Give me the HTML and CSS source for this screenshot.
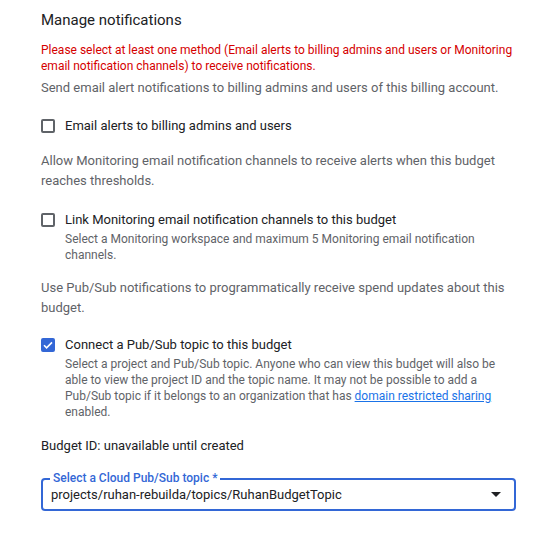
FILE: index.html
```html
<!DOCTYPE html>
<html>
<head>
<meta charset="utf-8">
<link rel="stylesheet" href="styles.css">
</head>
<body>
<div class="page">
  <h2 class="title">Manage notifications</h2>
  <p class="error">Please select at least one method (Email alerts to billing admins and users or Monitoring email notification channels) to receive notifications.</p>
  <p class="desc desc-first">Send email alert notifications to billing admins and users of this billing account.</p>

  <div class="option opt1">
    <span class="box"></span>
    <div class="opt-text">
      <div class="opt-label">Email alerts to billing admins and users</div>
    </div>
  </div>

  <p class="desc desc-block">Allow Monitoring email notification channels to receive alerts when this budget reaches thresholds.</p>

  <div class="option opt2">
    <span class="box"></span>
    <div class="opt-text">
      <div class="opt-label">Link Monitoring email notification channels to this budget</div>
      <div class="opt-sub">Select a Monitoring workspace and maximum 5 Monitoring email notification channels.</div>
    </div>
  </div>

  <p class="desc desc-block">Use Pub/Sub notifications to programmatically receive spend updates about this budget.</p>

  <div class="option opt3">
    <span class="box checked">
      <svg width="14" height="14" viewBox="0 0 14 14"><path d="M3 7.2l2.6 2.6L11 4.4" fill="none" stroke="#fff" stroke-width="1.6"/></svg>
    </span>
    <div class="opt-text">
      <div class="opt-label">Connect a Pub/Sub topic to this budget</div>
      <div class="opt-sub">Select a project and Pub/Sub topic. Anyone who can view this budget will also be able to view the project ID and the topic name. It may not be possible to add a Pub/Sub topic if it belongs to an organization that has <a class="link" href="#">domain restricted sharing</a> enabled.</div>
    </div>
  </div>

  <p class="budget-id">Budget ID: unavailable until created</p>

  <div class="field">
    <span class="field-label">Select a Cloud Pub/Sub topic *</span>
    <span class="field-value">projects/ruhan-rebuilda/topics/RuhanBudgetTopic</span>
    <span class="arrow"></span>
  </div>
</div>
</body>
</html>
```

FILE: styles.css
```css
* { box-sizing: border-box; }
body {
  margin: 0;
  background: #fff;
  font-family: Roboto, "Noto Sans", Arial, sans-serif;
  color: #202124;
}
.page {
  padding: 10px 0 0 41px;
  width: 518px;
}
.title {
  margin: 0;
  font-size: 15px;
  line-height: 20px;
  font-weight: 400;
  color: #202124;
}
.error {
  margin: 12px 0 0;
  font-size: 12px;
  line-height: 16px;
  color: #d50000;
}
.desc {
  font-size: 13px;
  line-height: 20px;
  color: #5f6368;
}
.desc-first { margin: 4px 0 0; }
.desc-block { margin: 15px 0 0; }
.option {
  display: flex;
  gap: 10px;
  align-items: flex-start;
}
.opt1 { margin-top: 18px; }
.opt2 { margin-top: 19px; }
.opt3 { margin-top: 17px; }
.box {
  flex: none;
  width: 14px;
  height: 14px;
  margin-top: 3px;
  border: 2px solid #5f6368;
  border-radius: 2px;
  display: flex;
  align-items: center;
  justify-content: center;
}
.box.checked {
  background: #3367d6;
  border-color: #3367d6;
}
.box svg { flex: none; }
.opt-text { flex: 1; }
.opt-label {
  font-size: 13px;
  line-height: 20px;
  color: #202124;
}
.opt-sub {
  margin-top: 1px;
  font-size: 12px;
  line-height: 16px;
  color: #5f6368;
}
.link {
  color: #1a73e8;
  text-decoration: underline;
}
.budget-id {
  margin: 16px 0 0;
  font-size: 13px;
  line-height: 20px;
  color: #202124;
}
.field {
  position: relative;
  margin-top: 22px;
  width: 475px;
  height: 33px;
  border: 2px solid #3367d6;
  border-radius: 4px;
  display: flex;
  align-items: center;
  padding: 0 8px;
}
.field-label {
  position: absolute;
  top: -9px;
  left: 7px;
  padding: 0 3px;
  background: #fff;
  font-size: 12px;
  line-height: 14px;
  font-weight: 500;
  color: #3367d6;
}
.field-value {
  flex: 1;
  font-size: 13px;
  color: #202124;
}
.arrow {
  width: 0;
  height: 0;
  margin-right: 5px;
  border-left: 5px solid transparent;
  border-right: 5px solid transparent;
  border-top: 5px solid #202124;
}
```
